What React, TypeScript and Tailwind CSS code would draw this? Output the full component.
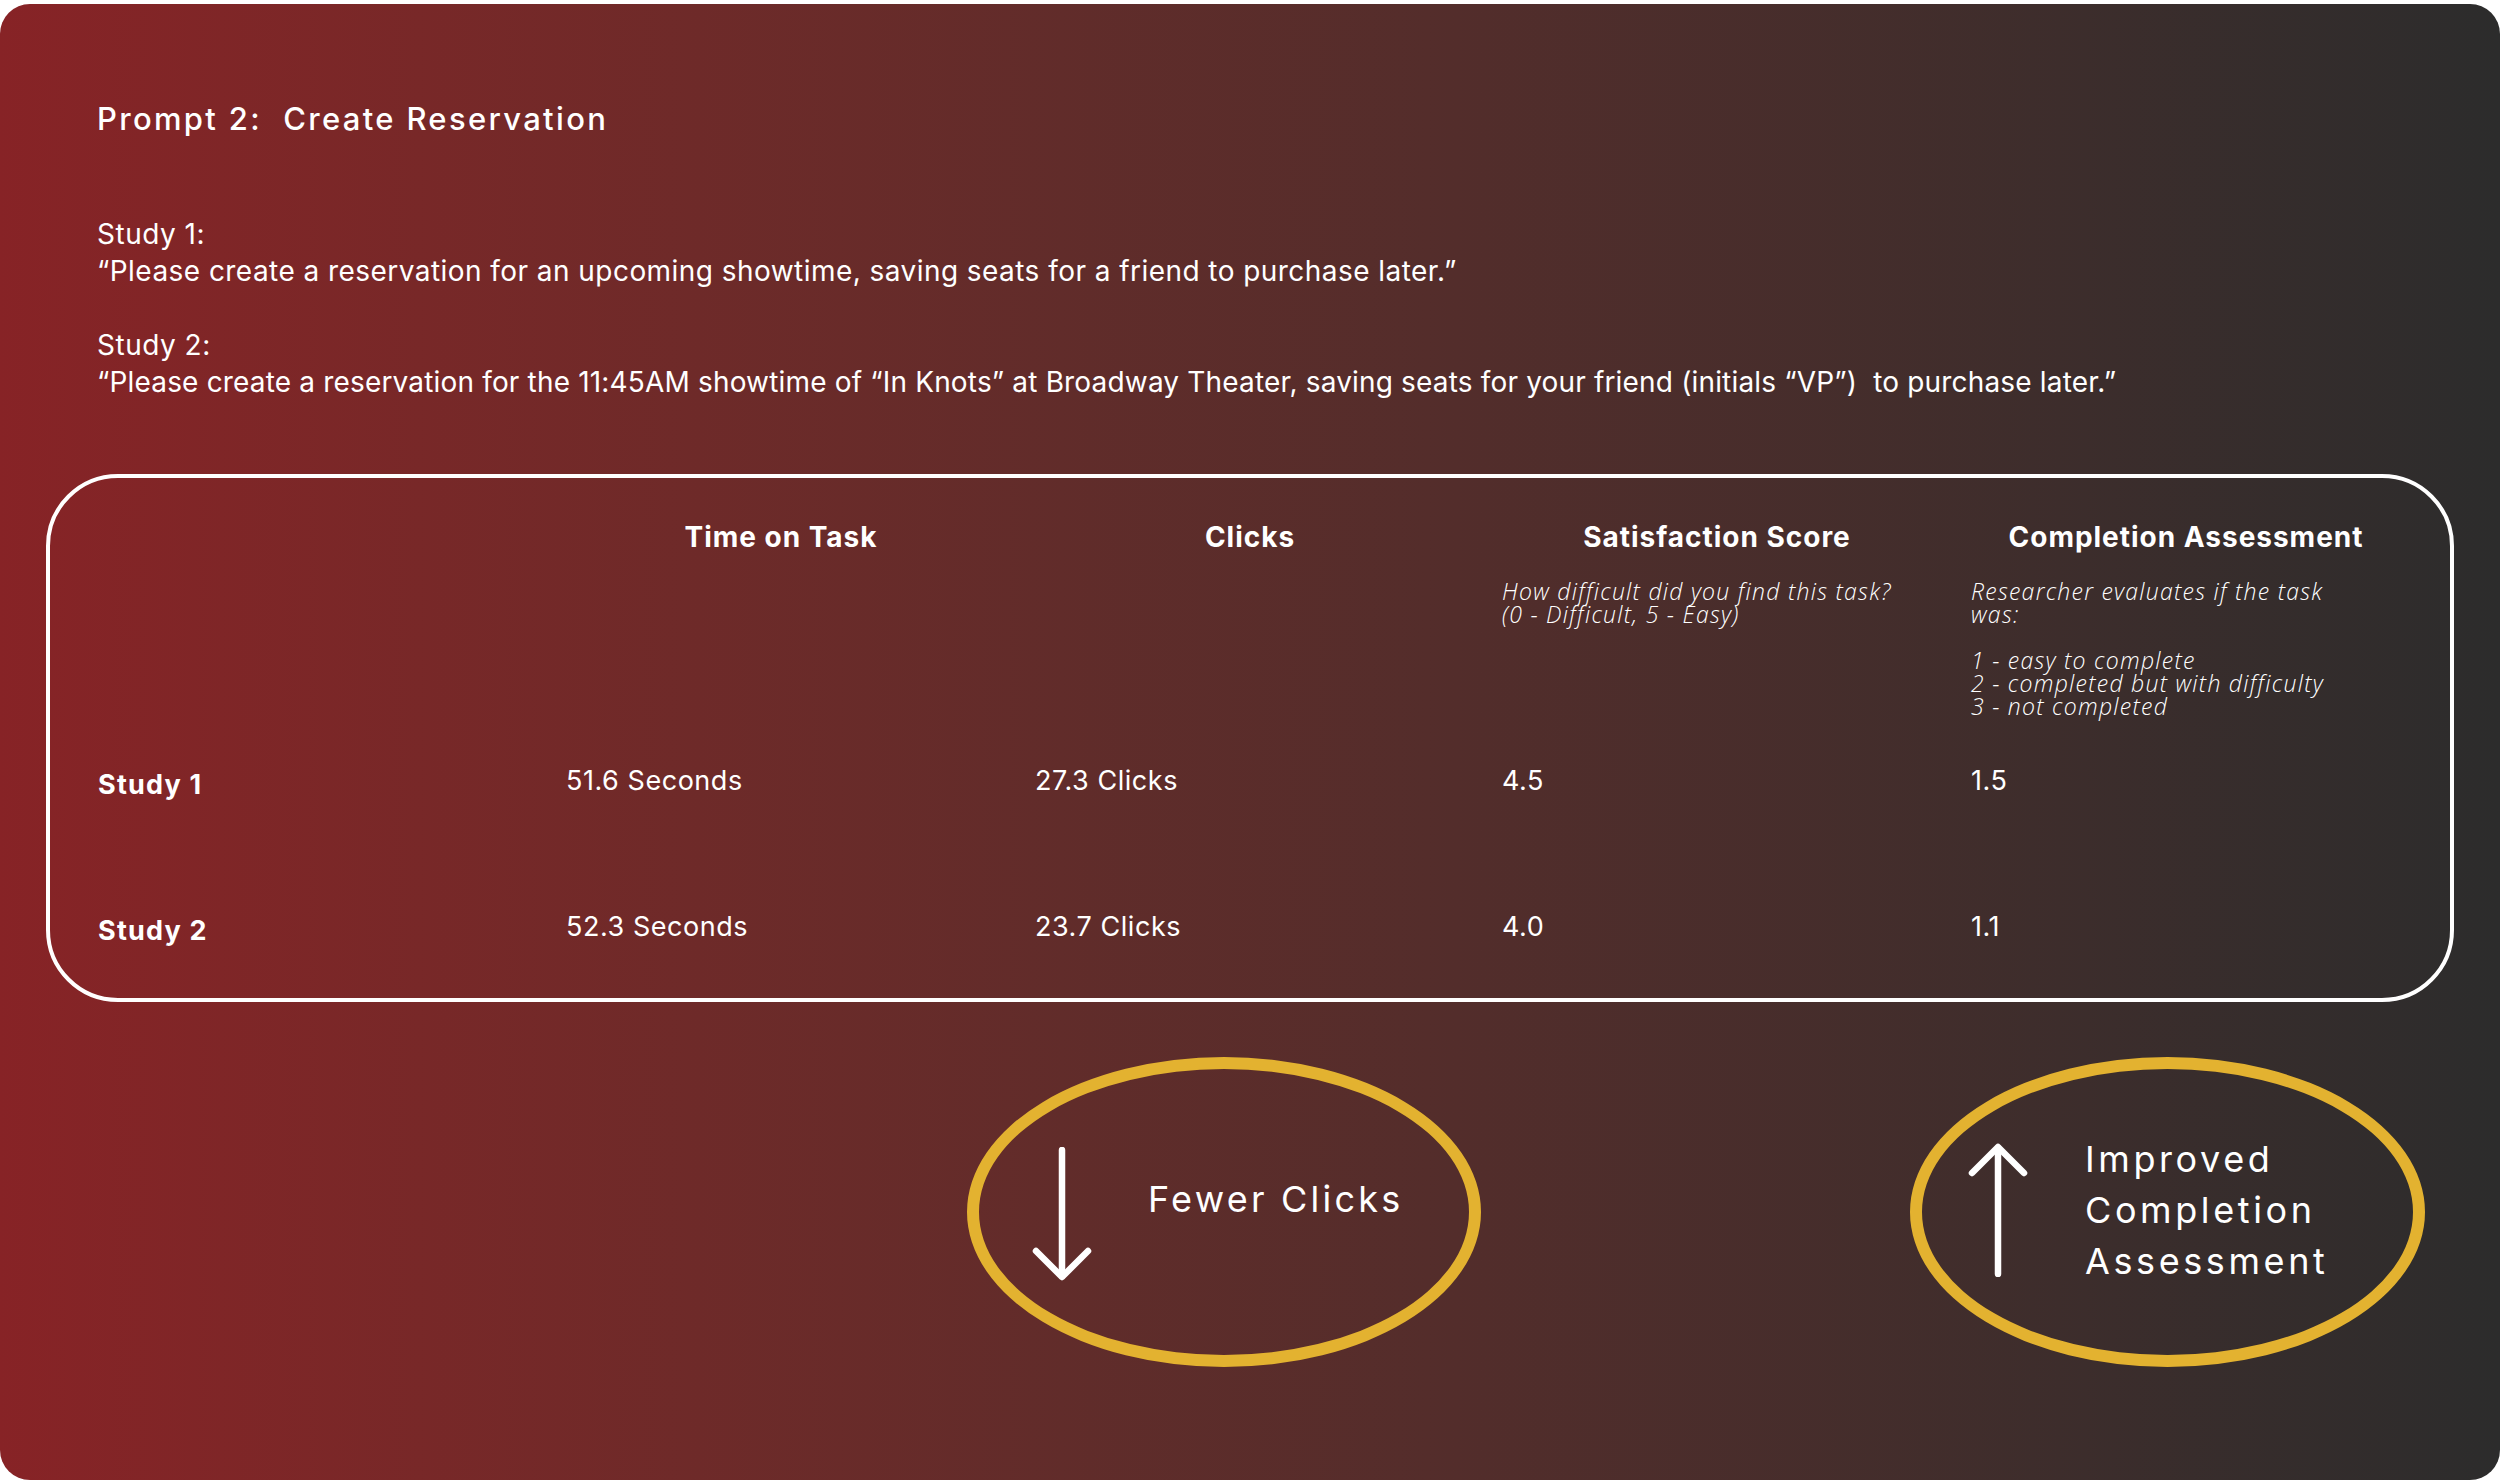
import React from "react";

const cols = "grid grid-cols-[468px_469px_467px_469px_1fr]";

function ArrowDown() {
  return (
    <svg width="60" height="134" viewBox="0 0 60 134" fill="none" stroke="white" strokeWidth="6.5" strokeLinecap="round" strokeLinejoin="round">
      <line x1="30" y1="3" x2="30" y2="129" />
      <polyline points="4,104 30,130 56,104" />
    </svg>
  );
}

function ArrowUp() {
  return (
    <svg width="60" height="134" viewBox="0 0 60 134" fill="none" stroke="white" strokeWidth="6.5" strokeLinecap="round" strokeLinejoin="round">
      <line x1="30" y1="5" x2="30" y2="131" />
      <polyline points="4,30 30,4 56,30" />
    </svg>
  );
}

export default function App() {
  const headers = [
    { title: "Time on Task", sub: null as string[] | null },
    { title: "Clicks", sub: null as string[] | null },
    {
      title: "Satisfaction Score",
      sub: ["How difficult did you find this task?", "(0 - Difficult, 5 - Easy)"],
    },
    {
      title: "Completion Assessment",
      sub: [
        "Researcher evaluates if the task",
        "was:",
        "",
        "1 - easy to complete",
        "2 - completed but with difficulty",
        "3 - not completed",
      ],
    },
  ];

  const rows = [
    { label: "Study 1", vals: ["51.6 Seconds", "27.3 Clicks", "4.5", "1.5"] },
    { label: "Study 2", vals: ["52.3 Seconds", "23.7 Clicks", "4.0", "1.1"] },
  ];

  return (
    <div className="min-h-[1480px] w-[2500px] bg-white pt-[4px]">
      <div className="h-[1476px] w-full overflow-hidden rounded-[30px] bg-linear-to-r from-[#872326] to-[#2c2c2c] pt-[97px] font-['Inter',sans-serif] text-white">
        <div className="pl-[97px]">
          <h1 className="text-[31px] font-medium leading-[36px] tracking-[0.075em]">
            Prompt 2:&nbsp; Create Reservation
          </h1>
          <div className="mt-[79px] text-[28px] leading-[37px]">
            <p className="tracking-[0.018em]">Study 1:</p>
            <p className="tracking-[0.016em]">
              “Please create a reservation for an upcoming showtime, saving seats for a friend to purchase later.”
            </p>
            <p className="mt-[37px] tracking-[0.018em]">Study 2:</p>
            <p className="whitespace-nowrap tracking-[0.006em]">
              “Please create a reservation for the 11:45AM showtime of “In Knots” at Broadway Theater, saving seats for
              your friend (initials “VP”)&nbsp; to purchase later.”
            </p>
          </div>
        </div>

        <div className="mx-[46px] mt-[73px] h-[528px] rounded-[72px] border-[4px] border-white pl-[48px]">
          <div className={`${cols} pt-[42px]`}>
            <div />
            {headers.map((h) => (
              <div key={h.title}>
                <h3 className="w-[430px] text-center text-[28px] font-bold leading-[34px] tracking-[0.035em]">{h.title}</h3>
                {h.sub && (
                  <div className="mt-[26px] whitespace-nowrap font-['Open_Sans',sans-serif] text-[23px] font-light italic leading-[23px] tracking-[0.055em]">
                    {h.sub.map((s, i) => (
                      <p key={i} className="h-[23px]">
                        {s}
                      </p>
                    ))}
                  </div>
                )}
              </div>
            ))}
          </div>
          {rows.map((r) => (
            <div key={r.label} className={`${cols} h-[146px] pt-[47px] text-[27px] leading-[32px] tracking-[0.02em]`}>
              <div className="mt-[4px] text-[27px] font-bold tracking-[0.045em]">{r.label}</div>
              {r.vals.map((v) => (
                <div key={v}>{v}</div>
              ))}
            </div>
          ))}
        </div>

        <div className="mt-[55px] flex pl-[967px]">
          <div className="flex h-[310px] w-[514px] rounded-[50%] border-[12px] border-[#e3b230] pl-[53px] pt-[78px]">
            <div>
              <ArrowDown />
            </div>
            <div className="ml-[56px] mt-[31px] whitespace-nowrap text-[36px] leading-[42px] tracking-[0.09em]">Fewer Clicks</div>
          </div>
          <div className="ml-[429px] flex h-[310px] w-[515px] rounded-[50%] border-[12px] border-[#e3b230] pl-[46px] pt-[65px]">
            <div className="mt-[9px]">
              <ArrowUp />
            </div>
            <div className="ml-[57px] text-[36px] leading-[51px] tracking-[0.1em]">
              Improved
              <br />
              Completion
              <br />
              Assessment
            </div>
          </div>
        </div>
      </div>
    </div>
  );
}
